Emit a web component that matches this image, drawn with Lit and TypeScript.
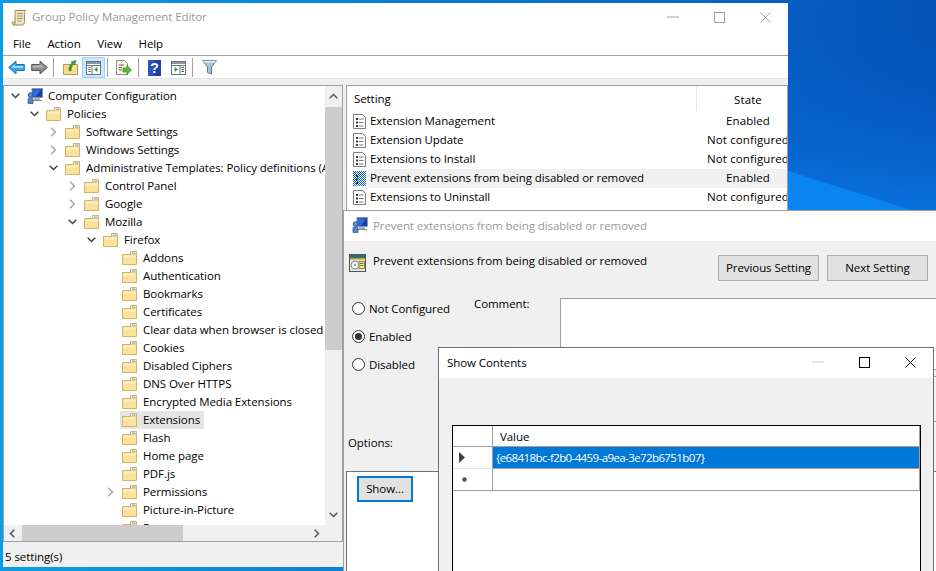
import { LitElement, html, css } from 'lit';
import { customElement } from 'lit/decorators.js';

type TreeRow = { label: string; level: number; exp?: 'open' | 'closed'; selected?: boolean };

const treeRows: TreeRow[] = [
  { label: 'Policies', level: 1, exp: 'open' },
  { label: 'Software Settings', level: 2, exp: 'closed' },
  { label: 'Windows Settings', level: 2, exp: 'closed' },
  { label: 'Administrative Templates: Policy definitions (ADMX files)', level: 2, exp: 'open' },
  { label: 'Control Panel', level: 3, exp: 'closed' },
  { label: 'Google', level: 3, exp: 'closed' },
  { label: 'Mozilla', level: 3, exp: 'open' },
  { label: 'Firefox', level: 4, exp: 'open' },
  { label: 'Addons', level: 5 },
  { label: 'Authentication', level: 5 },
  { label: 'Bookmarks', level: 5 },
  { label: 'Certificates', level: 5 },
  { label: 'Clear data when browser is closed', level: 5 },
  { label: 'Cookies', level: 5 },
  { label: 'Disabled Ciphers', level: 5 },
  { label: 'DNS Over HTTPS', level: 5 },
  { label: 'Encrypted Media Extensions', level: 5 },
  { label: 'Extensions', level: 5, selected: true },
  { label: 'Flash', level: 5 },
  { label: 'Home page', level: 5 },
  { label: 'PDF.js', level: 5 },
  { label: 'Permissions', level: 5, exp: 'closed' },
  { label: 'Picture-in-Picture', level: 5 },
  { label: 'Popups', level: 5 },
];

const settings = [
  { name: 'Extension Management', state: 'Enabled' },
  { name: 'Extension Update', state: 'Not configured' },
  { name: 'Extensions to Install', state: 'Not configured' },
  { name: 'Prevent extensions from being disabled or removed', state: 'Enabled', active: true },
  { name: 'Extensions to Uninstall', state: 'Not configured' },
];

const chevron = (kind?: 'open' | 'closed') => {
  if (kind === 'open')
    return html`<svg width="9" height="6" viewBox="0 0 9 6"><path d="M.7.7 4.5 4.5 8.3.7" fill="none" stroke="#404040" stroke-width="1.5"/></svg>`;
  if (kind === 'closed')
    return html`<svg width="7" height="10" viewBox="0 0 7 10"><path d="M1 .8 5.4 5 1 9.2" fill="none" stroke="#a6a6a6" stroke-width="1.5"/></svg>`;
  return '';
};

const folder = html`<svg class="ico" width="15" height="14" viewBox="0 0 15 14">
  <path d="M.5 3.5h14v10H.5z" fill="#fbe29b" stroke="#d2b36c"/>
  <path d="M1.5 4.5h12v2h-12z" fill="#fdefc4"/>
  <path d="M8.5 3.5V.5h6v3" fill="#fdefc4" stroke="#d2b36c"/>
  <path d="M10 1.5h3.5v1.5H10z" fill="#8cc0e8"/>
</svg>`;

const policyIcon = html`<svg class="ico" width="13" height="15" viewBox="0 0 13 15">
  <path d="M.5.5h9l3 3v11H.5z" fill="#fff" stroke="#7d7d7d"/>
  <path d="M3 4h2v2H3zM3 7.5h2v2H3zM3 11h2v2H3z" fill="#3a3a3a"/>
  <path d="M6 5h4.5M6 8.5h4.5M6 12h4.5" stroke="#7d7d7d"/>
</svg>`;

const activePolicyIcon = html`<svg class="ico" width="13" height="15" viewBox="0 0 13 15">
  <defs><pattern id="dith" width="2" height="2" patternUnits="userSpaceOnUse">
    <rect width="2" height="2" fill="#fff"/><rect width="1" height="1" fill="#0a5cc0"/><rect x="1" y="1" width="1" height="1" fill="#0a5cc0"/>
  </pattern></defs>
  <rect width="13" height="15" fill="url(#dith)"/>
  <path d="M3 4h2v2H3zM3 7.5h2v2H3zM3 11h2v2H3z" fill="#0a3a80"/>
</svg>`;

const computerIcon = html`<svg class="ico" width="16" height="16" viewBox="0 0 16 16">
  <rect x="5" y=".5" width="10.5" height="9" fill="#1c3fa8" stroke="#8d98a8"/>
  <path d="M6 1.5h8l-5 7H6z" fill="#2a6fe0"/>
  <path d="M7 10h6v2H7z" fill="#a8b0bc"/>
  <path d="M5 12.5h10" stroke="#7f8896"/>
  <circle cx="3.5" cy="7" r="2.3" fill="#5a93d0" stroke="#2f5f95"/>
  <path d="M1 15.5v-4c0-1.500 1-2 2.500-2s2.500.5 2.500 2v4z" fill="#4f86c4" stroke="#2f5f95" stroke-width=".8"/>
</svg>`;

const dialogIcon = html`<svg class="ico" width="17" height="18" viewBox="0 0 17 18">
  <rect x=".5" y=".5" width="16" height="17" fill="#e8e6d8" stroke="#4e5a5a"/>
  <path d="M1 1h15v3H1z" fill="#2f6f70"/>
  <path d="M1 4h15v1.5H1z" fill="#c09a40"/>
  <circle cx="6" cy="11" r="4" fill="#f0f0f0" stroke="#8a8a8a"/>
  <circle cx="6" cy="11" r="1" fill="#8a8a8a"/>
  <path d="M10 7.5h5.500v7H10z" fill="#f5e7a8" stroke="#8e7d3c"/>
  <path d="M11 9.5h3.500M11 11.5h3.500" stroke="#6a6a50"/>
</svg>`;

const scrollIcon = html`<svg class="ico" width="17" height="17" viewBox="0 0 17 17">
  <path d="M4 1.500h10.500c-1 1-1 2.500-1 4v7c0 2-1 3.500-2.500 3.500H2.500c1.500-.5 1.500-2 1.500-3.500z" fill="#efe4bb" stroke="#9b8c60"/>
  <path d="M1 13h3l-.5 3H2.300C1.300 16 .8 14.500 1 13z" fill="#d9c88f" stroke="#9b8c60" stroke-width=".7"/>
  <path d="M6 4.500h6M6 7h6M6 9.500h6M6 12h4.500" stroke="#a89a70"/>
</svg>`;

const windowGlyphs = (color: string, minColor: string) => html`
  <svg width="12" height="2" viewBox="0 0 12 2"><path d="M0 1h12" stroke=${minColor}/></svg>
  <svg width="11" height="11" viewBox="0 0 11 11"><rect x=".5" y=".5" width="10" height="10" fill="none" stroke=${color}/></svg>
  <svg width="11" height="11" viewBox="0 0 11 11"><path d="M.5.500l10 10M10.500.5l-10 10" stroke=${color}/></svg>
`;

@customElement('app-root')
export class AppRoot extends LitElement {
  static styles = css`
    :host {
      display: block;
      position: relative;
      width: 936px;
      height: 571px;
      overflow: hidden;
      font-family: 'Open Sans', 'Liberation Sans', sans-serif;
      font-size: 11.5px;
      letter-spacing: -0.08px;
      color: #000;
    }
    .wallpaper { position: absolute; inset: 0; }
    .ico { flex: none; display: block; }

    /* editor window */
    .editor {
      position: absolute;
      left: 3px;
      top: 3px;
      width: 785px;
      height: 564px;
      display: flex;
      flex-direction: column;
      background: #f0f0f0;
    }
    .titlebar {
      height: 30px;
      flex: none;
      box-sizing: border-box;
      padding-bottom: 2px;
      background: #fff;
      display: flex;
      align-items: center;
      color: #999;
      white-space: nowrap;
    }
    .editor .titlebar { padding-left: 8px; gap: 4px; }
    .editor .titlebar span { margin-top: -2px; }
    .wbtns { margin-left: auto; display: flex; align-items: center; gap: 35px; padding-right: 17px; }
    .menu {
      height: 22px;
      flex: none;
      box-sizing: content-box;
      background: #fff;
      border-bottom: 1px solid #a0a0a0;
      display: flex;
      align-items: center;
      padding-left: 10px;
      gap: 16.5px;
    }
    .menu span { margin-top: -2px; }
    .tools {
      height: 22px;
      flex: none;
      background: #fff;
      border-bottom: 1px solid #e3e3e3;
      display: flex;
      align-items: center;
    }
    .strip { height: 6px; flex: none; }
    .panes {
      flex: 1;
      min-height: 0;
      display: flex;
      gap: 3px;
    }
    .status {
      height: 25px;
      flex: none;
      display: flex;
      align-items: center;
      padding: 3px 0 0 2px;
      box-sizing: border-box;
    }

    /* toolbar bits */
    .tb { flex: none; display: flex; align-items: center; justify-content: center; height: 21px; margin-top: 1px; }
    .tb.on { background: #cce8ff; box-shadow: inset 0 0 0 1px #99d1ff; }
    .sep { flex: none; width: 1px; height: 19px; background: #a0a0a0; margin-top: 1px; }

    /* tree */
    .treepane {
      width: 340px;
      flex: none;
      box-sizing: border-box;
      border: 1px solid #a0a0a0;
      display: grid;
      grid-template-columns: 321px 17px;
      grid-template-rows: 439px 16px;
      background: #f0f0f0;
    }
    .tree { background: #fff; padding-top: 1px; overflow: hidden; }
    .row {
      height: 18px;
      display: flex;
      align-items: center;
      white-space: nowrap;
    }
    .chev { flex: none; width: 16px; padding-left: 2px; display: flex; align-items: center; }
    .chev.closed { padding-left: 3px; width: 15px; }
    .chev.root { width: 16px; padding: 0; }
    .node { display: flex; align-items: center; height: 18px; padding: 0 4px 0 2px; margin-left: -2px; }
    .node.sel { background: #e5e5e5; }
    .node span { margin-left: 6px; margin-top: -2px; }
    .node span.rootlabel { margin-left: 5px; }
    .vbar, .hbar { display: flex; background: #f0f0f0; align-items: center; }
    .vbar { flex-direction: column; padding-top: 7px; box-sizing: border-box; }
    .vthumb { width: 17px; height: 243px; background: #cdcdcd; margin: 8px 0 0; }
    .vbar .down { margin-top: auto; margin-bottom: 7px; }
    .hbar { padding-left: 5px; }
    .hthumb { width: 161px; height: 16px; background: #cdcdcd; margin-left: 7px; }
    .hbar .right { margin-left: auto; margin-right: 5px; }
    .corner { background: #f0f0f0; }

    /* setting list */
    .list {
      flex: 1;
      min-width: 0;
      box-sizing: border-box;
      border: 1px solid #a0a0a0;
      border-bottom: none;
      background: #fff;
      overflow: hidden;
    }
    .lhead {
      height: 26px;
      display: grid;
      grid-template-columns: 350px 102px;
      align-items: center;
    }
    .lhead .name { padding: 0 0 2px 7px; height: 24px; display: flex; align-items: center; border-right: 1px solid #e5e5e5; box-sizing: border-box; }
    .lrow {
      height: 19px;
      display: grid;
      grid-template-columns: 350px 102px;
      white-space: nowrap;
    }
    .cell { display: flex; align-items: center; padding-left: 6px; }
    .cell .txt { margin-left: 2px; padding: 0 0 2px 2px; box-sizing: border-box; flex: 1; height: 19px; display: flex; align-items: center; }
    .lrow.active .txt, .lrow.active .st { background: #f0f0f0; }
    .st { text-align: center; line-height: 17px; letter-spacing: 0.1px; }

    /* policy dialog */
    .policy {
      position: absolute;
      left: 343px;
      top: 210px;
      width: 720px;
      height: 400px;
      box-sizing: border-box;
      border: 1px solid #a0a0a0;
      background: #f0f0f0;
    }
    .policy .titlebar { padding-left: 8px; gap: 5px; }
    .policy .faint { margin-left: 537px; width: 14px; height: 1px; background: #ddd; flex: none; }
    .phead { display: flex; padding: 13px 0 0 5px; height: 57px; box-sizing: border-box; }
    .phead .ttl { width: 352px; margin-top: -1px; line-height: 16px; padding-left: 7px; flex: none; box-sizing: border-box; }
    .btn {
      flex: none;
      box-sizing: border-box;
      background: #e1e1e1;
      border: 1px solid #adadad;
      display: flex;
      align-items: center;
      justify-content: center;
      font: inherit;
      letter-spacing: inherit;
      color: #000;
      height: 26px;
      padding: 0 0 1px;
    }
    .phead .btn { width: 101px; margin-right: 8px; margin-top: 1px; }
    .opts { display: flex; }
    .radios { width: 130px; padding: 1px 0 0 8px; box-sizing: border-box; display: flex; flex-direction: column; gap: 10px; flex: none; }
    .radio { display: flex; align-items: center; height: 18px; gap: 4px; }
    .radio i { width: 13px; height: 13px; box-sizing: border-box; border: 1px solid #333; border-radius: 50%; background: #fff; display: flex; align-items: center; justify-content: center; }
    .radio i.on::after { content: ''; width: 7px; height: 7px; border-radius: 50%; background: #333; }
    .clabel { width: 86px; flex: none; line-height: 16px; margin-top: -2px; }
    .boxes { flex: 1; display: flex; flex-direction: column; gap: 6px; }
    .box { box-sizing: border-box; border: 1px solid #a0a0a0; background: #fff; height: 72px; }
    .box + .box { height: 46px; background: #f0f0f0; }
    .optlabel { margin: 13px 0 20px 4px; line-height: 16px; }
    .panels { display: flex; margin-left: 2px; }
    .panel { box-sizing: border-box; border: 1px solid #707070; background: #fff; width: 294px; height: 120px; padding: 4px 0 0 10px; flex: none; }
    .panel + .panel { width: 400px; border-left: none; }
    .show { width: 56px; border: 2px solid #0078d7; }

    /* show contents */
    .contents {
      position: absolute;
      left: 438px;
      top: 347px;
      width: 496px;
      height: 300px;
      box-sizing: border-box;
      border: 1px solid #707070;
      background: #f0f0f0;
    }
    .contents .titlebar { color: #000; padding-left: 8px; }
    .cbody { padding: 47px 0 0 13px; }
    .grid {
      box-sizing: border-box;
      width: 469px;
      height: 260px;
      border: 1px solid #000;
      background: #fff;
      display: grid;
      grid-template-columns: 40px 1fr;
      grid-template-rows: 21px 22px 22px;
    }
    .grid > div {
      box-sizing: border-box;
      display: flex;
      align-items: center;
      border-bottom: 1px solid #a0a0a0;
      border-right: 1px solid #a0a0a0;
    }
    .grid .mk { padding-left: 6px; }
    .grid .mk.first { border-bottom-color: #e3e3e3; }
    .grid .mk.new { padding-left: 9px; }
    .grid .v { padding-left: 3px; }
    .grid .vh { padding-left: 7px; }
    .grid .cur { background: #0078d7; color: #fff; letter-spacing: -0.6px; }
  `;

  private renderTree() {
    return treeRows.map(r => html`
      <div class="row" style="padding-left:${5 + 19 * r.level}px">
        <span class="chev ${r.exp === 'closed' ? 'closed' : ''}">${chevron(r.exp)}</span>
        <span class="node ${r.selected ? 'sel' : ''}">${folder}<span>${r.label}</span></span>
      </div>`);
  }

  render() {
    return html`
      <svg class="wallpaper" width="936" height="571" viewBox="0 0 936 571">
        <defs>
          <linearGradient id="wp" x1="0" y1="0" x2="1" y2="0">
            <stop offset="0" stop-color="#0a9ee6"/>
            <stop offset=".7" stop-color="#0868cc"/>
            <stop offset="1" stop-color="#0552b6"/>
          </linearGradient>
          <linearGradient id="wp2" x1="0" y1="0" x2="0" y2="1">
            <stop offset="0" stop-color="#0052b8" stop-opacity="0"/>
            <stop offset="1" stop-color="#0a78e6" stop-opacity=".8"/>
          </linearGradient>
        </defs>
        <rect width="936" height="571" fill="url(#wp)"/>
        <rect x="788" width="148" height="211" fill="url(#wp2)"/>
        <path d="M788 171 915 211H788z" fill="#0a84f0"/>
      </svg>

      <div class="editor">
        <div class="titlebar">${scrollIcon}<span>Group Policy Management Editor</span>
          <div class="wbtns">${windowGlyphs('#a0a0a0', '#a0a0a0')}</div>
        </div>
        <div class="menu"><span>File</span><span>Action</span><span>View</span><span>Help</span></div>
        <div class="tools">
          <span class="tb" style="width:17px;margin-left:5px">
            <svg width="17" height="15" viewBox="0 0 17 15"><path d="M.7 7.500 8 1v3.500h8.300v6H8V14z" fill="#3ba3ee" stroke="#1a6fc0"/><path d="M3 7.500 7 4.500v1.500h8V8z" fill="#a6dcff"/></svg>
          </span>
          <span class="tb" style="width:17px;margin-left:6px">
            <svg width="17" height="15" viewBox="0 0 17 15"><path d="M16.300 7.500 9 1v3.500H.7v6H9V14z" fill="#8c8c8c" stroke="#555"/><path d="M1.500 5.500h7V4l5 3.500H1.500z" fill="#b5b5b5"/></svg>
          </span>
          <span class="sep" style="margin-left:5px"></span>
          <span class="tb" style="width:15px;margin-left:9px">
            <svg width="15" height="15" viewBox="0 0 15 15"><path d="M.5 4.500h14v10H.5z" fill="#f8dc90" stroke="#b59a50"/><path d="M6 10.500C5.500 7 7 4.500 9 3.500L8 2l5-1.500L11.500 5 10.500 3.800C9 5.500 8 8 8 11z" fill="#3fa535" stroke="#2b7a24" stroke-width=".6"/></svg>
          </span>
          <span class="tb on" style="width:23px;margin-left:4px">
            <svg width="15" height="14" viewBox="0 0 15 14"><rect x=".5" y=".5" width="14" height="13" fill="#fff" stroke="#6a7480"/><path d="M1 1h13v2H1z" fill="#8a96a4"/><path d="M1 4.500h13" stroke="#6a7480"/><path d="M6 4v9" stroke="#6a7480"/><path d="M2.500 6.500h2M2.500 8.500h2M2.500 10.500h2" stroke="#555"/><path d="M11.500 6v5L8 8.500z" fill="#2e9a3a"/></svg>
          </span>
          <span class="sep" style="margin-left:2px"></span>
          <span class="tb" style="width:16px;margin-left:8px">
            <svg width="16" height="16" viewBox="0 0 16 16"><path d="M.5.500h8l3 3v11H.5z" fill="#fbf6dc" stroke="#8c8c8c"/><path d="M3 5h5M3 7.500h3M3 10h3" stroke="#666"/><path d="M7 8h4V5.500L15.500 10 11 14.500V12H7z" fill="#5cb83c" stroke="#3a8a2a" stroke-width=".7"/></svg>
          </span>
          <span class="sep" style="margin-left:6px"></span>
          <span class="tb" style="width:13px;margin-left:9px">
            <svg width="13" height="16" viewBox="0 0 13 16"><rect width="13" height="16" fill="#1f3fa8"/><rect width="6" height="16" fill="#2c55c4"/><text x="6.500" y="13" font-size="14" font-weight="700" font-family="Liberation Sans" fill="#fff" text-anchor="middle">?</text></svg>
          </span>
          <span class="tb" style="width:16px;margin-left:9px">
            <svg width="15" height="14" viewBox="0 0 15 14"><rect x=".5" y=".5" width="14" height="13" fill="#fff" stroke="#6a7480"/><path d="M1 1h13v2H1z" fill="#8a96a4"/><path d="M1 4.500h13M9 4v9" stroke="#6a7480"/><path d="M10.500 6.500h2.500M10.500 8.500h2.500M10.500 10.500h2.500" stroke="#555"/><path d="M3.500 6v5L7 8.500z" fill="#2e9a3a"/></svg>
          </span>
          <span class="sep" style="margin-left:6px"></span>
          <span class="tb" style="width:15px;margin-left:9px">
            <svg width="15" height="15" viewBox="0 0 15 15"><path d="M.5.500h14l-5 6.500v7l-4-1.500V7z" fill="#a8c4d8" stroke="#5f7a90"/><path d="M.8.800h13.400l-1.500 2H2.300z" fill="#dfeaf2"/></svg>
          </span>
        </div>
        <div class="strip"></div>
        <div class="panes">
          <div class="treepane">
            <div class="tree">
              <div class="row" style="padding-left:7px">
                <span class="chev root">${chevron('open')}</span>
                <span class="node">${computerIcon}<span class="rootlabel">Computer Configuration</span></span>
              </div>
              ${this.renderTree()}
            </div>
            <div class="vbar">
              <svg width="9" height="6" viewBox="0 0 9 6"><path d="M.7 5.300 4.500 1.500 8.300 5.300" fill="none" stroke="#555" stroke-width="1.500"/></svg>
              <div class="vthumb"></div>
              <svg class="down" width="9" height="6" viewBox="0 0 9 6"><path d="M.7.700 4.500 4.500 8.300.7" fill="none" stroke="#555" stroke-width="1.500"/></svg>
            </div>
            <div class="hbar">
              <svg width="6" height="9" viewBox="0 0 6 9"><path d="M5.300.7 1.500 4.500 5.300 8.300" fill="none" stroke="#555" stroke-width="1.500"/></svg>
              <div class="hthumb"></div>
              <svg class="right" width="6" height="9" viewBox="0 0 6 9"><path d="M.7.700 4.500 4.500.7 8.300" fill="none" stroke="#555" stroke-width="1.500"/></svg>
            </div>
            <div class="corner"></div>
          </div>
          <div class="list">
            <div class="lhead"><div class="name">Setting</div><div class="st">State</div></div>
            ${settings.map(s => html`
              <div class="lrow ${s.active ? 'active' : ''}">
                <div class="cell">${s.active ? activePolicyIcon : policyIcon}<span class="txt">${s.name}</span></div>
                <div class="st">${s.state}</div>
              </div>`)}
          </div>
        </div>
        <div class="status">5 setting(s)</div>
      </div>

      <div class="policy">
        <div class="titlebar">${computerIcon}<span>Prevent extensions from being disabled or removed</span><span class="faint"></span></div>
        <div class="phead">
          ${dialogIcon}
          <div class="ttl">Prevent extensions from being disabled or removed</div>
          <button class="btn">Previous Setting</button>
          <button class="btn">Next Setting</button>
        </div>
        <div class="opts">
          <div class="radios">
            <div class="radio"><i></i>Not Configured</div>
            <div class="radio"><i class="on"></i>Enabled</div>
            <div class="radio"><i></i>Disabled</div>
          </div>
          <div class="clabel">Comment:</div>
          <div class="boxes"><div class="box"></div><div class="box"></div></div>
        </div>
        <div class="optlabel">Options:</div>
        <div class="panels">
          <div class="panel"><button class="btn show">Show...</button></div>
          <div class="panel"></div>
        </div>
      </div>

      <div class="contents">
        <div class="titlebar">Show Contents<div class="wbtns">${windowGlyphs('#000', '#c8c8c8')}</div></div>
        <div class="cbody">
          <div class="grid">
            <div></div><div class="vh">Value</div>
            <div class="mk first"><svg width="6" height="11" viewBox="0 0 6 11"><path d="M0 0 6 5.500 0 11z" fill="#404040"/></svg></div>
            <div class="v cur">{e68418bc-f2b0-4459-a9ea-3e72b6751b07}</div>
            <div class="mk new"><svg width="5" height="5" viewBox="0 0 5 5"><circle cx="2.500" cy="2.500" r="2.200" fill="#505050"/></svg></div>
            <div class="v"></div>
          </div>
        </div>
      </div>
    `;
  }
}
